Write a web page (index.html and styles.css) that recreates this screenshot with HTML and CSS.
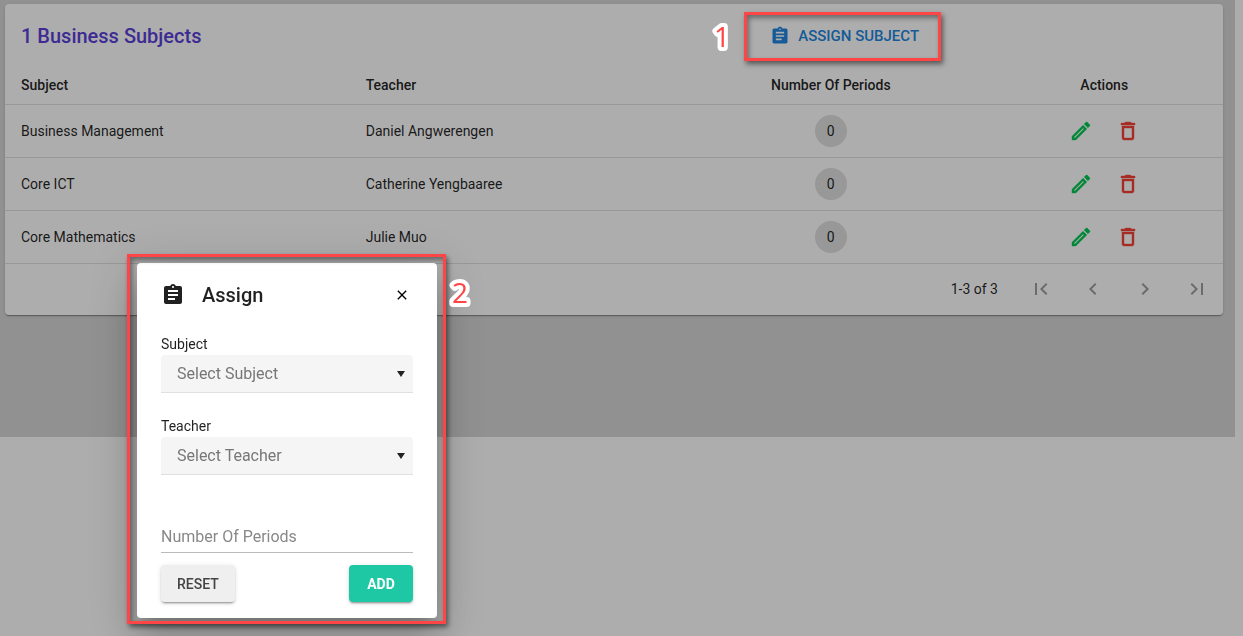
FILE: index.html
```
<!DOCTYPE html>
<html lang="en">
<head>
    <meta charset="UTF-8">
    <meta name="viewport" content="width=device-width, initial-scale=1.0">
    <title>Business Subjects</title>
    <link rel="stylesheet" href="styles.css">
</head>
<body>
    <!-- shared icons -->
    <svg class="sprite" aria-hidden="true">
        <symbol id="assignment" viewBox="0 0 24 24"><path d="M19 3h-4.180C14.400 1.840 13.300 1 12 1c-1.300 0-2.400.840-2.820 2H5c-1.100 0-2 .900-2 2v14c0 1.100.900 2 2 2h14c1.100 0 2-.900 2-2V5c0-1.100-.900-2-2-2zm-7 0c.550 0 1 .450 1 1s-.450 1-1 1-1-.450-1-1 .450-1 1-1zm2 14H7v-2h7v2zm3-4H7v-2h10v2zm0-4H7V7h10v2z"/></symbol>
        <symbol id="edit" viewBox="0 0 24 24"><path d="M14.060 9.020l.920.920L5.920 19H5v-.920l9.060-9.060M17.660 3c-.250 0-.510.100-.700.290l-1.830 1.830 3.750 3.750 1.830-1.830c.390-.390.390-1.020 0-1.410l-2.340-2.340c-.200-.200-.450-.290-.710-.290zm-3.600 3.190L3 17.250V21h3.750L17.810 9.940l-3.750-3.750z"/></symbol>
        <symbol id="delete" viewBox="0 0 24 24"><path d="M6 19c0 1.100.900 2 2 2h8c1.100 0 2-.900 2-2V7H6v12zM8 9h8v10H8V9zm7.500-5l-1-1h-5l-1 1H5v2h14V4h-3.500z"/></symbol>
        <symbol id="first" viewBox="0 0 24 24"><path d="M18.410 16.590L13.820 12l4.590-4.590L17 6l-6 6 6 6zM6 6h2v12H6z"/></symbol>
        <symbol id="prev" viewBox="0 0 24 24"><path d="M15.410 7.410L14 6l-6 6 6 6 1.410-1.410L10.830 12z"/></symbol>
        <symbol id="next" viewBox="0 0 24 24"><path d="M10 6L8.590 7.410 13.170 12l-4.580 4.590L10 18l6-6z"/></symbol>
        <symbol id="last" viewBox="0 0 24 24"><path d="M5.590 7.410L10.180 12l-4.590 4.590L7 18l6-6-6-6zM16 6h2v12h-2z"/></symbol>
        <symbol id="close" viewBox="0 0 24 24"><path d="M19 6.410L17.590 5 12 10.590 6.410 5 5 6.410 10.590 12 5 17.590 6.410 19 12 13.410 17.590 19 19 17.590 13.410 12z"/></symbol>
    </svg>

    <main>
        <section class="card">
            <header class="toolbar">
                <h1>1 Business Subjects</h1>
                <div class="assign">
                    <button type="button" class="assign-button">
                        <svg><use href="#assignment"/></svg>
                        ASSIGN SUBJECT
                    </button>
                    <span class="callout"></span>
                    <svg class="callout-number" viewBox="0 0 32 40"><text x="16" y="30" text-anchor="middle">1</text></svg>
                </div>
            </header>

            <table>
                <thead>
                    <tr>
                        <th class="col-subject">Subject</th>
                        <th class="col-teacher">Teacher</th>
                        <th class="col-periods">Number Of Periods</th>
                        <th class="col-actions">Actions</th>
                    </tr>
                </thead>
                <tbody>
                    <tr>
                        <td>Business Management</td>
                        <td>Daniel Angwerengen</td>
                        <td class="center"><span class="chip">0</span></td>
                        <td><div class="actions">
                            <button type="button" class="edit" aria-label="Edit"><svg><use href="#edit"/></svg></button>
                            <button type="button" class="delete" aria-label="Delete"><svg><use href="#delete"/></svg></button>
                        </div></td>
                    </tr>
                    <tr>
                        <td>Core ICT</td>
                        <td>Catherine Yengbaaree</td>
                        <td class="center"><span class="chip">0</span></td>
                        <td><div class="actions">
                            <button type="button" class="edit" aria-label="Edit"><svg><use href="#edit"/></svg></button>
                            <button type="button" class="delete" aria-label="Delete"><svg><use href="#delete"/></svg></button>
                        </div></td>
                    </tr>
                    <tr>
                        <td>Core Mathematics</td>
                        <td>Julie Muo</td>
                        <td class="center"><span class="chip">0</span></td>
                        <td><div class="actions">
                            <button type="button" class="edit" aria-label="Edit"><svg><use href="#edit"/></svg></button>
                            <button type="button" class="delete" aria-label="Delete"><svg><use href="#delete"/></svg></button>
                        </div></td>
                    </tr>
                </tbody>
            </table>

            <footer class="pagination">
                <span class="range">1-3 of 3</span>
                <nav>
                    <button type="button" disabled aria-label="First page"><svg><use href="#first"/></svg></button>
                    <button type="button" disabled aria-label="Previous page"><svg><use href="#prev"/></svg></button>
                    <button type="button" disabled aria-label="Next page"><svg><use href="#next"/></svg></button>
                    <button type="button" disabled aria-label="Last page"><svg><use href="#last"/></svg></button>
                </nav>
            </footer>
        </section>
    </main>

    <div class="scrim"></div>

    <!-- assign dialog -->
    <div class="dialog" role="dialog" aria-labelledby="dialogTitle">
        <header class="dialog-header">
            <svg><use href="#assignment"/></svg>
            <h2 id="dialogTitle">Assign</h2>
            <button type="button" class="close" aria-label="Close"><svg><use href="#close"/></svg></button>
        </header>

        <form>
            <div class="field">
                <label for="subject">Subject</label>
                <select id="subject" name="subject">
                    <option>Select Subject</option>
                </select>
            </div>

            <div class="field">
                <label for="teacher">Teacher</label>
                <select id="teacher" name="teacher">
                    <option>Select Teacher</option>
                </select>
            </div>

            <input type="text" name="periods" placeholder="Number Of Periods" aria-label="Number Of Periods">

            <div class="buttons">
                <button type="reset" class="reset">RESET</button>
                <button type="submit" class="add">ADD</button>
            </div>
        </form>
        <span class="callout"></span>
        <svg class="callout-number" viewBox="0 0 32 40"><text x="16" y="30" text-anchor="middle">2</text></svg>
    </div>
</body>
</html>
```
FILE: styles.css
```
* {
    box-sizing: border-box;
}

body {
    font-family: Roboto, sans-serif;
    font-size: 14px;
    line-height: 20px;
    color: rgba(0, 0, 0, 0.87);
    background-color: white;
    margin: 0;
}

.sprite {
    display: none;
}

svg {
    display: block;
    width: 24px;
    height: 24px;
    fill: currentColor;
}

button {
    font-family: inherit;
    font-size: 14px;
    font-weight: 500;
    padding: 0;
    border: none;
    background: none;
    cursor: pointer;
}

main {
    min-height: 437px;
    margin-right: 8px;
    padding: 4px 12px 0 5px;
    background-color: #d6d6d6;
}

.card {
    background-color: white;
    border-radius: 4px;
    box-shadow: 0 2px 1px -1px rgba(0, 0, 0, 0.2), 0 1px 1px rgba(0, 0, 0, 0.14), 0 1px 3px rgba(0, 0, 0, 0.12);
}

.toolbar {
    display: grid;
    grid-template-columns: 61% 1fr;
    align-items: center;
    height: 63px;
    padding-left: 16px;
}

h1 {
    margin: 0;
    font-size: 20px;
    font-weight: 500;
    color: #5b3fd9;
}

.assign {
    position: relative;
    justify-self: start;
    padding: 0 16px;
}

.assign-button {
    display: flex;
    align-items: center;
    gap: 8px;
    height: 36px;
    font-size: 15px;
    color: #2186e0;
}

.assign-button svg {
    width: 20px;
    height: 20px;
}

.callout {
    position: absolute;
    z-index: 3;
    inset: -6px -6px -7px -10px;
    border: 3px solid #ff4545;
    box-shadow: 2px 3px 5px rgba(0, 0, 0, 0.5), inset 2px 3px 5px rgba(0, 0, 0, 0.4);
    pointer-events: none;
}

.callout-number {
    position: absolute;
    z-index: 3;
    top: -1px;
    right: 100%;
    width: 32px;
    height: 40px;
    margin-right: 16px;
    font-family: "Open Sans", sans-serif;
    font-size: 28px;
    fill: #ff4545;
    stroke: white;
    stroke-width: 8px;
    stroke-linejoin: round;
    paint-order: stroke;
}

table {
    width: 100%;
    table-layout: fixed;
    border-collapse: collapse;
}

th, td {
    height: 53px;
    padding: 0 16px;
    text-align: left;
    border-bottom: 1px solid #e0e0e0;
}

th {
    height: 37px;
    font-weight: 500;
}

.col-subject {
    width: 28.3%;
}

.col-teacher {
    width: 26.8%;
}

.col-periods, .col-actions, .center {
    text-align: center;
}

.col-actions {
    width: 19.5%;
}

.chip {
    display: block;
    width: 32px;
    height: 32px;
    margin: 0 auto;
    line-height: 32px;
    border-radius: 50%;
    background-color: #e0e0e0;
}

.actions {
    display: flex;
    justify-content: center;
    gap: 23px;
}

.actions svg {
    stroke: currentColor;
    stroke-width: 0.4;
}

.edit {
    color: #00c853;
}

.delete {
    color: #f44336;
}

.pagination {
    display: flex;
    justify-content: flex-end;
    align-items: center;
    gap: 31px;
    height: 51px;
    padding-right: 14px;
}

.pagination nav {
    display: flex;
    gap: 28px;
}

.pagination button {
    color: rgba(0, 0, 0, 0.38);
}

.scrim {
    position: fixed;
    z-index: 1;
    inset: 0;
    background-color: rgba(0, 0, 0, 0.32);
}

/* Dialog */
.dialog {
    position: absolute;
    z-index: 2;
    top: 263px;
    left: 137px;
    width: 300px;
    padding: 16px 24px;
    background-color: white;
    border-radius: 4px;
    box-shadow: 0 11px 15px -7px rgba(0, 0, 0, 0.2), 0 24px 38px 3px rgba(0, 0, 0, 0.14), 0 9px 46px 8px rgba(0, 0, 0, 0.12);
}

.dialog .callout {
    inset: -9px -9px -6px -10px;
}

.dialog .callout-number {
    top: 10px;
    right: auto;
    left: 100%;
    margin: 0 0 0 7px;
}

.dialog-header {
    display: flex;
    align-items: center;
    height: 32px;
    gap: 17px;
}

h2 {
    flex: 1;
    margin: 0;
    font-size: 20px;
    font-weight: 500;
}

.close svg {
    width: 16px;
    height: 16px;
}

.close {
    padding: 3px;
}

form {
    margin-top: 23px;
}

.field {
    position: relative;
    margin-bottom: 23px;
}

/* drop-down arrow over the select */
.field::after {
    content: "";
    position: absolute;
    right: 8px;
    bottom: 16px;
    border: 4px solid transparent;
    border-top: 6px solid #222;
    border-bottom: none;
    pointer-events: none;
}

label {
    display: block;
    line-height: 21px;
}

select {
    display: block;
    width: 100%;
    height: 38px;
    padding: 0 16px;
    font-family: inherit;
    font-size: 16px;
    color: #777;
    border: none;
    border-bottom: 1px solid #e0e0e0;
    border-radius: 4px 4px 0 0;
    appearance: none;
    background-color: #f5f5f5;
}

input {
    display: block;
    width: 100%;
    height: 32px;
    margin-top: 46px;
    padding: 0;
    font-family: inherit;
    font-size: 16px;
    border: none;
    border-bottom: 1px solid #bbb;
}

input::placeholder {
    color: #888;
}

.buttons {
    display: flex;
    justify-content: space-between;
    margin-top: 12px;
}

.reset, .add {
    height: 37px;
    padding: 0 16px;
    border-radius: 4px;
    box-shadow: 0 3px 1px -2px rgba(0, 0, 0, 0.2), 0 2px 2px rgba(0, 0, 0, 0.14), 0 1px 5px rgba(0, 0, 0, 0.12);
}

.reset {
    color: #444;
    background-color: #efefef;
}

.add {
    min-width: 64px;
    font-weight: 700;
    color: white;
    background-color: #1fc8a5;
}
```
